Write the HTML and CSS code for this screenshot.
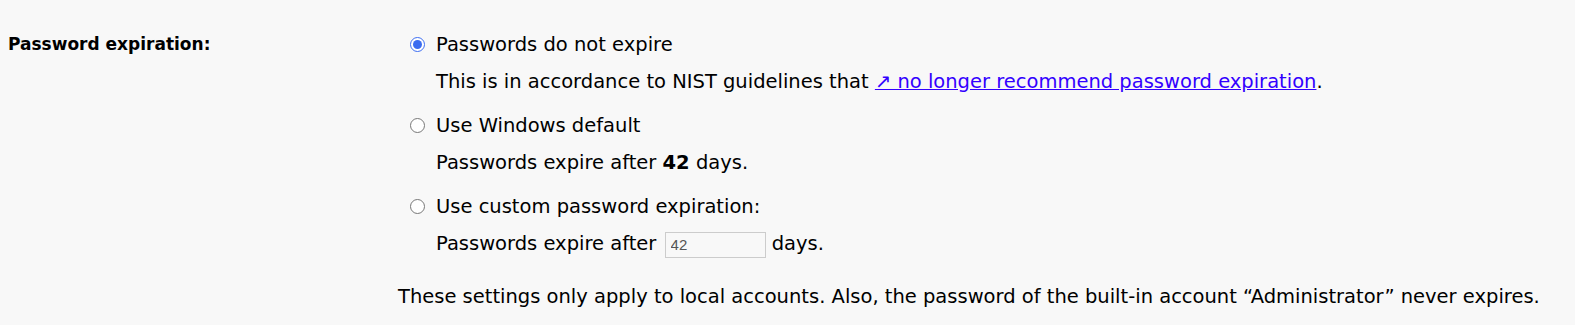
FILE: index.html
```html
<!DOCTYPE html>
<html>

<head>
  <meta charset="UTF-8">
  <title>Password expiration</title>
  <link rel="stylesheet" href="styles.css">
</head>

<body>
  <div class="setting">
    <div class="label">Password expiration:</div>
    <div class="options">
      <label class="option">
        <input type="radio" name="expire" checked>
        <span>Passwords do not expire</span>
      </label>
      <p class="desc">This is in accordance to NIST guidelines that <a href="#">&#8599; no longer recommend password expiration</a>.</p>

      <label class="option">
        <input type="radio" name="expire">
        <span>Use Windows default</span>
      </label>
      <p class="desc">Passwords expire after <b>42</b> days.</p>

      <label class="option">
        <input type="radio" name="expire">
        <span>Use custom password expiration:</span>
      </label>
      <p class="desc">Passwords expire after <input class="days" type="text" value="42"> days.</p>
    </div>
  </div>
  <p class="note">These settings only apply to local accounts. Also, the password of the built-in account &ldquo;Administrator&rdquo; never expires.</p>
</body>

</html>
```

FILE: styles.css
```css
body {
  margin: 0;
  background-color: #f8f8f8;
  color: #000;
  font-family: "DejaVu Sans", Verdana, sans-serif;
  font-size: 19.5px;
}

.setting {
  display: flex;
  padding: 26px 8px 0 8px;
}

.label {
  width: 390px;
  font-size: 17px;
  font-weight: bold;
  line-height: 36px;
}

.options {
  display: flex;
  flex-direction: column;
}

.option {
  display: flex;
  align-items: center;
  height: 36px;
}

.option input {
  margin: 0 11px 0 12px;
  width: 15px;
  height: 15px;
  accent-color: #3b6cf0;
}

.desc {
  margin: 2px 0 7px 38px;
  line-height: 36px;
}

.desc a {
  color: #3300ff;
}

.days {
  width: 101px;
  height: 26px;
  box-sizing: border-box;
  border: 1px solid #cccccc;
  background-color: #f8f8f8;
  color: #555;
  font-family: "Liberation Sans", Arial, sans-serif;
  font-size: 15px;
  padding: 2px 5px;
  margin-left: 2px;
  vertical-align: middle;
}

.note {
  margin: 10px 0 0 398px;
  line-height: 36px;
}
```
